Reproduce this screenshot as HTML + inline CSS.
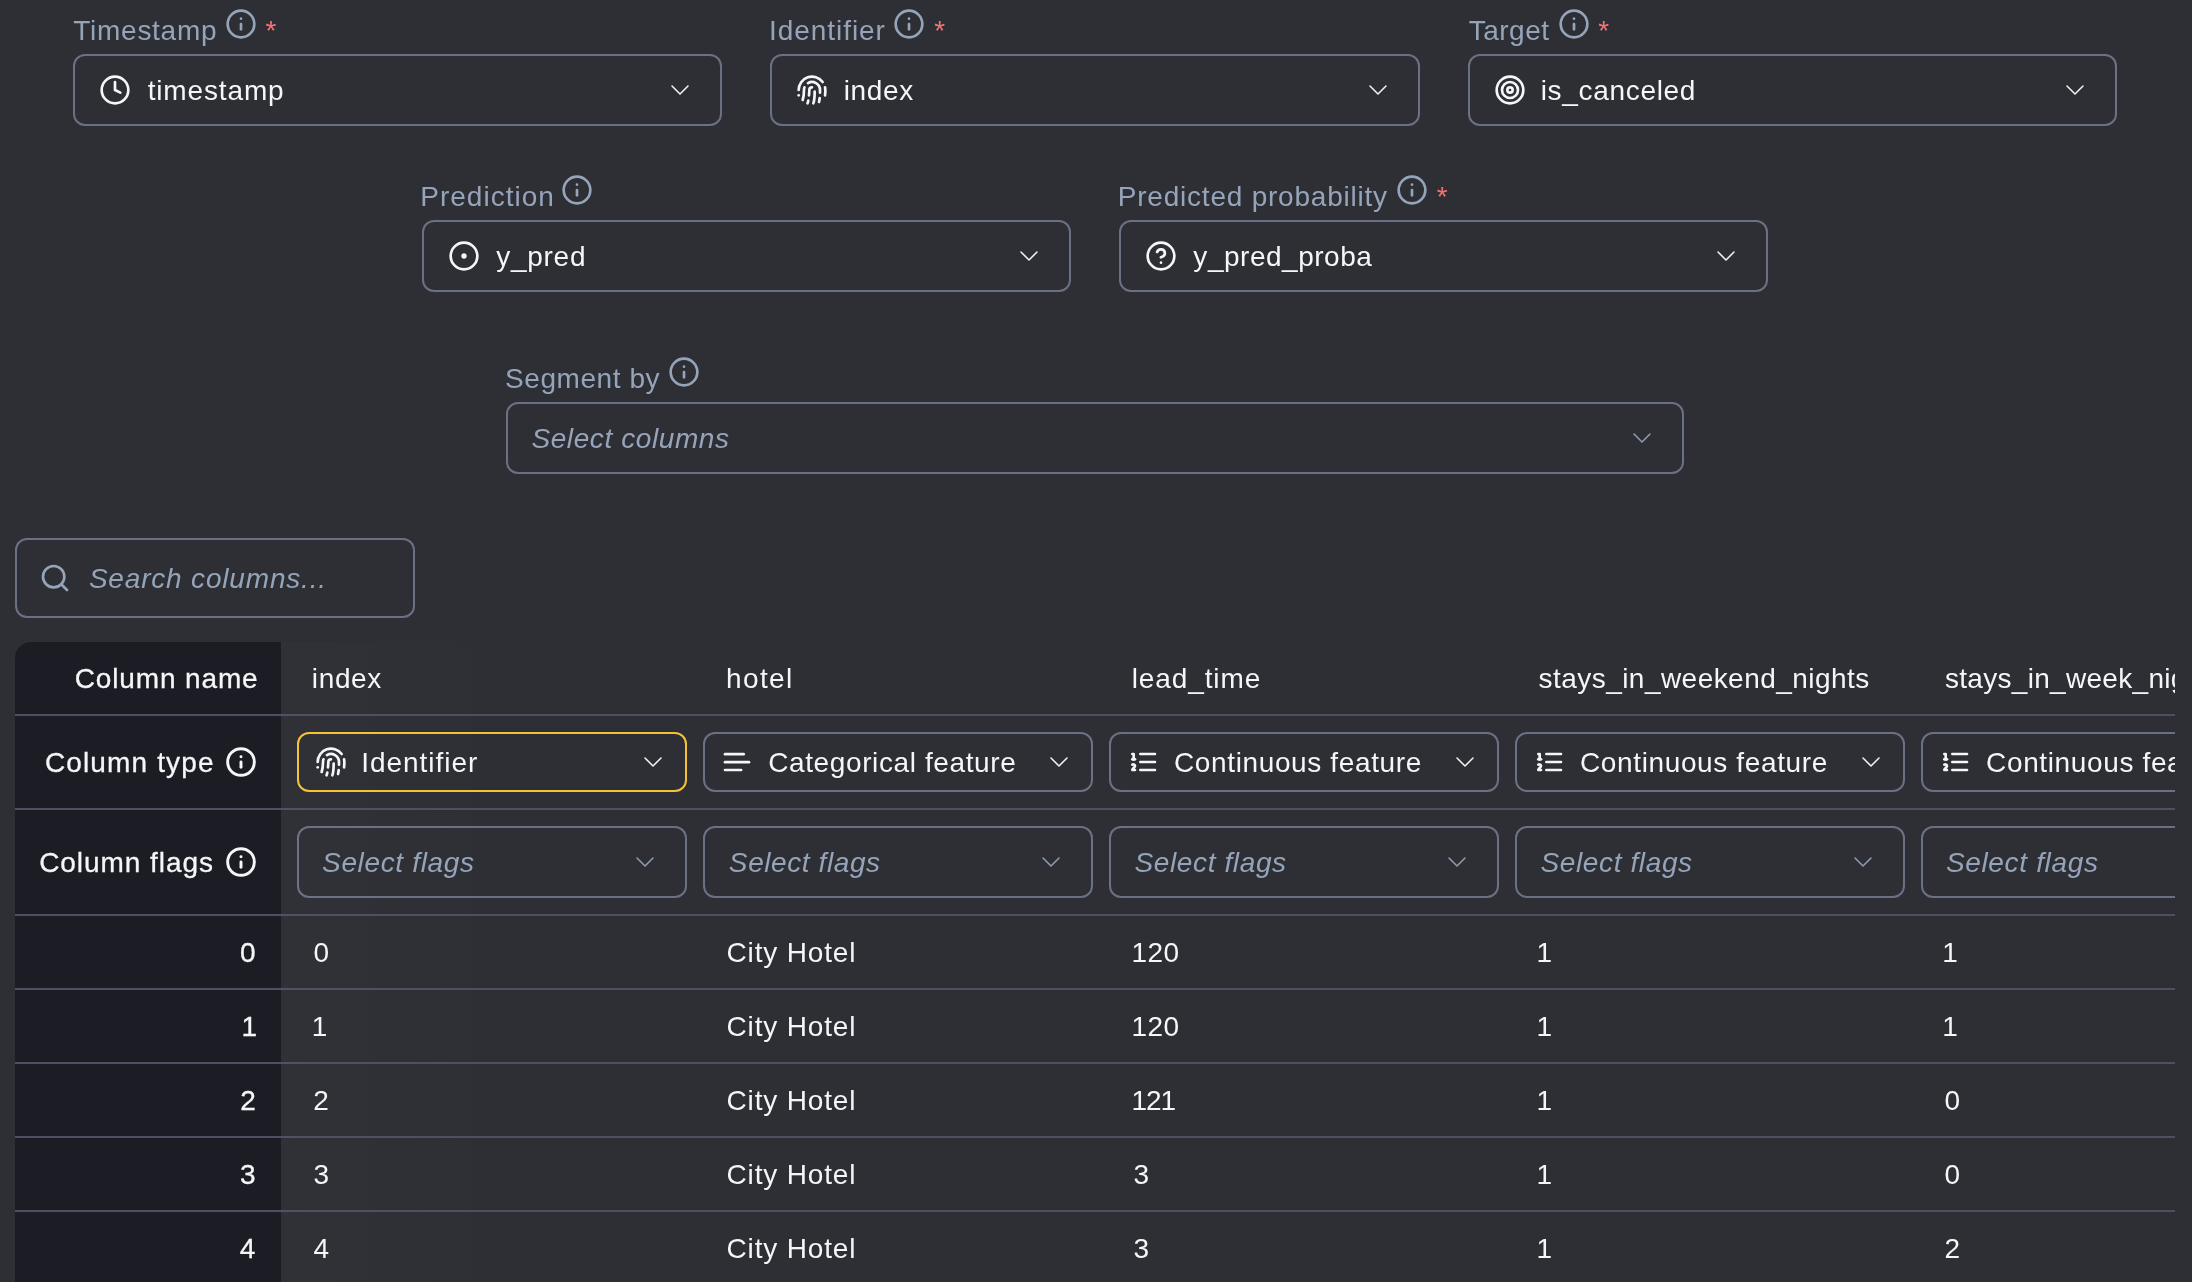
<!DOCTYPE html>
<html lang="en">
<head>
<meta charset="utf-8">
<title>Column configuration</title>
<style>
*{box-sizing:border-box;margin:0;padding:0}
html,body{width:2192px;height:1282px;overflow:hidden;background:#2e2f35}
body{will-change:transform}
body{font-family:"Liberation Sans",sans-serif;font-size:28px;line-height:40px;color:#f5f6f8;position:relative;letter-spacing:.55px}
[id]{position:relative;top:1px}
svg.ic{width:32px;height:32px;fill:none;stroke:currentColor;stroke-width:2;stroke-linecap:round;stroke-linejoin:round;flex:none;display:block}
.field{position:absolute}
.lbl{position:absolute;left:1px;top:-44px;height:40px;display:flex;align-items:center;color:#96a4ba;white-space:nowrap}
.lbl .t{display:inline-block}
.lbl svg.ic{position:relative;top:-6px;margin-left:10px}
.lbl .req{color:#f47272;margin-left:9px;position:relative;top:1px;font-size:28px}
.sel{width:100%;height:72px;border:2px solid #6a7184;border-radius:12px;display:flex;align-items:center;padding:0 24px;white-space:nowrap}
.sel .v{margin-left:16px;flex:1;position:relative;top:0px}
.sel .ph{flex:1;font-style:italic;color:#96a4ba}
.sel .chev{color:#f1f2f4;stroke-width:1.15}
.sel .chev.dim{color:#8f9cb2}

.search{position:absolute;left:15px;top:538px;width:400px;height:80px;border:2px solid #6a7184;border-radius:12px;display:flex;align-items:center;padding:0 22px;color:#96a4ba;white-space:nowrap}
.search .ph{margin-left:16px;font-style:italic}
.tbl{position:absolute;left:15px;top:642px;width:2160px;height:640px;overflow:hidden;border-top-left-radius:16px}
.tbl:before{content:"";position:absolute;left:266px;top:0;width:240px;height:100%;background:linear-gradient(to right,rgba(255,255,255,.013),rgba(255,255,255,0));pointer-events:none}
.tr{display:flex;border-bottom:2px solid #4c5062;width:2300px}
.h74{height:74px}.h94{height:94px}.h106{height:106px}
.st{width:266px;flex:none;background:#1c1d24;display:flex;align-items:center;justify-content:flex-end;padding-right:24px;white-space:nowrap}
.st{-webkit-text-stroke:0.3px #f5f6f8}
.st.hd{letter-spacing:.95px}
.st svg.ic{margin-left:12px;stroke-width:2.2}
.td{width:406px;flex:none;display:flex;align-items:center;white-space:nowrap;overflow:hidden}
.td.c0{width:414px}
.td.tx{padding-left:32px}
.td.sl{padding:0 8px}
.td.sl.c0{padding-left:16px}
.sel.sm{height:60px;padding:0 16px}
.sel.hl{border-color:#f7c135}
/*TUNE*/
#a1{letter-spacing:0.55px;left:-3.43px}
#a2{letter-spacing:0.55px;left:-4.67px}
#a3{letter-spacing:0.55px;left:-2.59px}
#a5{letter-spacing:0.55px;left:-4.45px}
#cn0{letter-spacing:0.63px;left:-1.15px}
#cn1{letter-spacing:1.38px;left:-1.00px}
#cn2{letter-spacing:0.89px;left:-1.30px}
#cn3{letter-spacing:0.46px;left:-0.53px}
#cn4{letter-spacing:0.31px;left:-0.14px}
#d0_0{letter-spacing:0.55px;left:0.39px}
#d0_1{letter-spacing:0.83px;left:-0.45px}
#d0_2{letter-spacing:0.40px;left:-1.54px}
#d0_3{letter-spacing:0.55px;left:-2.58px}
#d0_4{letter-spacing:0.55px;left:-2.65px}
#d1_0{letter-spacing:0.55px;left:-1.31px}
#d1_1{letter-spacing:0.83px;left:-0.45px}
#d1_2{letter-spacing:0.40px;left:-1.54px}
#d1_3{letter-spacing:0.55px;left:-2.58px}
#d1_4{letter-spacing:0.55px;left:-2.65px}
#d2_0{letter-spacing:0.55px;left:0.26px}
#d2_1{letter-spacing:0.83px;left:-0.45px}
#d2_2{letter-spacing:-1.00px;left:-1.54px}
#d2_3{letter-spacing:0.55px;left:-2.58px}
#d2_4{letter-spacing:0.55px;left:-0.50px}
#d3_0{letter-spacing:0.55px;left:0.50px}
#d3_1{letter-spacing:0.83px;left:-0.45px}
#d3_2{letter-spacing:0.55px;left:0.39px}
#d3_3{letter-spacing:0.55px;left:-2.58px}
#d3_4{letter-spacing:0.55px;left:-0.50px}
#d4_0{letter-spacing:0.55px;left:0.47px}
#d4_1{letter-spacing:0.83px;left:-0.45px}
#d4_2{letter-spacing:0.55px;left:0.39px}
#d4_3{letter-spacing:0.55px;left:-2.58px}
#d4_4{letter-spacing:0.55px;left:-0.50px}
#fl0{letter-spacing:0.65px;left:-0.94px}
#fl1{letter-spacing:0.59px;left:-0.15px}
#fl2{letter-spacing:0.63px;left:-0.57px}
#fl3{letter-spacing:0.63px;left:-0.57px}
#fl4{letter-spacing:0.66px;left:-1.08px}
#i1{letter-spacing:0.55px;left:-3.18px}
#i2{letter-spacing:0.55px;left:-4.32px}
#i3{letter-spacing:0.55px;left:-1.95px}
#i4{letter-spacing:0.55px;left:-6.32px}
#i5{letter-spacing:0.55px;left:-3.95px}
#i6{letter-spacing:0.55px;left:-3.95px}
#l1{letter-spacing:0.73px;left:-0.72px}
#l2{letter-spacing:0.94px;left:-1.95px}
#l3{letter-spacing:0.51px;left:-0.36px}
#l4{letter-spacing:1.01px;left:-2.76px}
#l5{letter-spacing:0.78px;left:-2.23px}
#l6{letter-spacing:0.57px;left:-1.99px}
#p6{letter-spacing:0.59px;left:-0.57px}
#ri0{letter-spacing:0.55px;left:-0.96px}
#ri1{letter-spacing:0.55px;left:0.53px}
#ri2{letter-spacing:0.55px;left:-0.58px}
#ri3{letter-spacing:0.55px;left:-0.82px}
#ri4{letter-spacing:0.55px;left:-1.06px}
#sph{letter-spacing:0.82px;left:1.89px}
#th0{letter-spacing:0.86px;left:1.55px}
#th1{letter-spacing:1.13px;left:1.60px}
#th2{letter-spacing:0.95px;left:0.95px}
#ty0{letter-spacing:0.98px;left:-1.83px}
#ty1{letter-spacing:0.61px;left:-0.80px}
#ty2{letter-spacing:0.63px;left:-1.01px}
#ty3{letter-spacing:0.63px;left:-1.01px}
#ty4{letter-spacing:0.63px;left:-0.90px}
#v1{letter-spacing:0.86px;left:0.63px}
#v2{letter-spacing:0.66px;left:-0.38px}
#v3{letter-spacing:0.69px;left:-1.38px}
#v4{letter-spacing:0.71px;left:0.31px}
#v5{letter-spacing:0.52px;left:0.36px}
/*END*/
</style>
</head>
<body>

<!-- row 1 -->
<div class="field" style="left:73px;top:54px;width:649px">
  <div class="lbl"><span class="t" id="l1">Timestamp</span><svg id="i1" class="ic" viewBox="0 0 24 24"><circle cx="12" cy="12" r="10"/><path d="M12 16v-4"/><path d="M12 8h.01"/></svg><span id="a1" class="req">*</span></div>
  <div class="sel"><svg class="ic" viewBox="0 0 24 24"><circle cx="12" cy="12" r="10"/><polyline points="12 6 12 12 16 14"/></svg><span class="v"><span id="v1">timestamp</span></span><svg class="ic chev" viewBox="0 0 24 24"><path d="m6 9 6 6 6-6"/></svg></div>
</div>

<div class="field" style="left:770px;top:54px;width:650px">
  <div class="lbl"><span class="t" id="l2">Identifier</span><svg id="i2" class="ic" viewBox="0 0 24 24"><circle cx="12" cy="12" r="10"/><path d="M12 16v-4"/><path d="M12 8h.01"/></svg><span id="a2" class="req">*</span></div>
  <div class="sel"><svg class="ic" viewBox="0 0 24 24"><path d="M12 10a2 2 0 0 0-2 2c0 1.020-.1 2.510-.26 4"/><path d="M14 13.120c0 2.380 0 6.380-1 8.880"/><path d="M17.290 21.020c.12-.6.43-2.300.5-3.020"/><path d="M2 12a10 10 0 0 1 18-6"/><path d="M2 16h.01"/><path d="M21.800 16c.2-2 .131-5.354 0-6"/><path d="M5 19.500C5.500 18 6 15 6 12a6 6 0 0 1 .34-2"/><path d="M8.650 22c.21-.66.45-1.320.57-2"/><path d="M9 6.800a6 6 0 0 1 9 5.200v2"/></svg><span class="v"><span id="v2">index</span></span><svg class="ic chev" viewBox="0 0 24 24"><path d="m6 9 6 6 6-6"/></svg></div>
</div>

<div class="field" style="left:1468px;top:54px;width:649px">
  <div class="lbl"><span class="t" id="l3">Target</span><svg id="i3" class="ic" viewBox="0 0 24 24"><circle cx="12" cy="12" r="10"/><path d="M12 16v-4"/><path d="M12 8h.01"/></svg><span id="a3" class="req">*</span></div>
  <div class="sel"><svg class="ic" viewBox="0 0 24 24"><circle cx="12" cy="12" r="10"/><circle cx="12" cy="12" r="6"/><circle cx="12" cy="12" r="2"/></svg><span class="v"><span id="v3">is_canceled</span></span><svg class="ic chev" viewBox="0 0 24 24"><path d="m6 9 6 6 6-6"/></svg></div>
</div>

<!-- row 2 -->
<div class="field" style="left:422px;top:220px;width:649px">
  <div class="lbl"><span class="t" id="l4">Prediction</span><svg id="i4" class="ic" viewBox="0 0 24 24"><circle cx="12" cy="12" r="10"/><path d="M12 16v-4"/><path d="M12 8h.01"/></svg></div>
  <div class="sel"><svg class="ic" viewBox="0 0 24 24"><circle cx="12" cy="12" r="10"/><circle cx="12" cy="12" r="1"/></svg><span class="v"><span id="v4">y_pred</span></span><svg class="ic chev" viewBox="0 0 24 24"><path d="m6 9 6 6 6-6"/></svg></div>
</div>

<div class="field" style="left:1119px;top:220px;width:649px">
  <div class="lbl"><span class="t" id="l5">Predicted probability</span><svg id="i5" class="ic" viewBox="0 0 24 24"><circle cx="12" cy="12" r="10"/><path d="M12 16v-4"/><path d="M12 8h.01"/></svg><span id="a5" class="req">*</span></div>
  <div class="sel"><svg class="ic" viewBox="0 0 24 24"><circle cx="12" cy="12" r="10"/><path d="M9.090 9a3 3 0 0 1 5.830 1c0 2-3 3-3 3"/><path d="M12 17h.01"/></svg><span class="v"><span id="v5">y_pred_proba</span></span><svg class="ic chev" viewBox="0 0 24 24"><path d="m6 9 6 6 6-6"/></svg></div>
</div>

<!-- row 3 -->
<div class="field" style="left:506px;top:402px;width:1178px">
  <div class="lbl"><span class="t" id="l6">Segment by</span><svg id="i6" class="ic" viewBox="0 0 24 24"><circle cx="12" cy="12" r="10"/><path d="M12 16v-4"/><path d="M12 8h.01"/></svg></div>
  <div class="sel"><span class="ph"><span id="p6">Select columns</span></span><svg class="ic chev dim" viewBox="0 0 24 24"><path d="m6 9 6 6 6-6"/></svg></div>
</div>

<!--TABLE-->
<div class="search"><svg class="ic" viewBox="0 0 24 24"><circle cx="11" cy="11" r="8"/><path d="m21 21-4.300-4.300"/></svg><span class="ph"><span id="sph">Search columns...</span></span></div>
<div class="tbl">
<div class="tr h74"><div class="st hd"><span id="th0">Column name</span></div><div class="td tx c0"><span id="cn0">index</span></div><div class="td tx c1"><span id="cn1">hotel</span></div><div class="td tx c2"><span id="cn2">lead_time</span></div><div class="td tx c3"><span id="cn3">stays_in_weekend_nights</span></div><div class="td tx c4"><span id="cn4">stays_in_week_nights</span></div></div>
<div class="tr h94"><div class="st hd"><span id="th1">Column type</span><svg class="ic" viewBox="0 0 24 24"><circle cx="12" cy="12" r="10"/><path d="M12 16v-4"/><path d="M12 8h.01"/></svg></div><div class="td sl c0"><div class="sel sm hl"><svg class="ic" viewBox="0 0 24 24"><path d="M12 10a2 2 0 0 0-2 2c0 1.020-.1 2.510-.26 4"/><path d="M14 13.120c0 2.380 0 6.380-1 8.880"/><path d="M17.290 21.020c.12-.6.43-2.300.5-3.020"/><path d="M2 12a10 10 0 0 1 18-6"/><path d="M2 16h.01"/><path d="M21.800 16c.2-2 .131-5.354 0-6"/><path d="M5 19.500C5.500 18 6 15 6 12a6 6 0 0 1 .34-2"/><path d="M8.650 22c.21-.66.45-1.320.57-2"/><path d="M9 6.800a6 6 0 0 1 9 5.200v2"/></svg><span class="v"><span id="ty0">Identifier</span></span><svg class="ic chev" viewBox="0 0 24 24"><path d="m6 9 6 6 6-6"/></svg></div></div><div class="td sl c1"><div class="sel sm "><svg class="ic" viewBox="0 0 24 24"><path d="M17 6.100H3"/><path d="M21 12.100H3"/><path d="M15.100 18H3"/></svg><span class="v"><span id="ty1">Categorical feature</span></span><svg class="ic chev" viewBox="0 0 24 24"><path d="m6 9 6 6 6-6"/></svg></div></div><div class="td sl c2"><div class="sel sm "><svg class="ic" viewBox="0 0 24 24"><line x1="10" x2="21" y1="6" y2="6"/><line x1="10" x2="21" y1="12" y2="12"/><line x1="10" x2="21" y1="18" y2="18"/><path d="M4 6h1v4"/><path d="M4 10h2"/><path d="M6 18H4c0-1 2-2 2-3s-1-1.500-2-1"/></svg><span class="v"><span id="ty2">Continuous feature</span></span><svg class="ic chev" viewBox="0 0 24 24"><path d="m6 9 6 6 6-6"/></svg></div></div><div class="td sl c3"><div class="sel sm "><svg class="ic" viewBox="0 0 24 24"><line x1="10" x2="21" y1="6" y2="6"/><line x1="10" x2="21" y1="12" y2="12"/><line x1="10" x2="21" y1="18" y2="18"/><path d="M4 6h1v4"/><path d="M4 10h2"/><path d="M6 18H4c0-1 2-2 2-3s-1-1.500-2-1"/></svg><span class="v"><span id="ty3">Continuous feature</span></span><svg class="ic chev" viewBox="0 0 24 24"><path d="m6 9 6 6 6-6"/></svg></div></div><div class="td sl c4"><div class="sel sm "><svg class="ic" viewBox="0 0 24 24"><line x1="10" x2="21" y1="6" y2="6"/><line x1="10" x2="21" y1="12" y2="12"/><line x1="10" x2="21" y1="18" y2="18"/><path d="M4 6h1v4"/><path d="M4 10h2"/><path d="M6 18H4c0-1 2-2 2-3s-1-1.500-2-1"/></svg><span class="v"><span id="ty4">Continuous feature</span></span><svg class="ic chev" viewBox="0 0 24 24"><path d="m6 9 6 6 6-6"/></svg></div></div></div>
<div class="tr h106"><div class="st hd"><span id="th2">Column flags</span><svg class="ic" viewBox="0 0 24 24"><circle cx="12" cy="12" r="10"/><path d="M12 16v-4"/><path d="M12 8h.01"/></svg></div><div class="td sl c0"><div class="sel"><span class="ph"><span id="fl0">Select flags</span></span><svg class="ic chev dim" viewBox="0 0 24 24"><path d="m6 9 6 6 6-6"/></svg></div></div><div class="td sl c1"><div class="sel"><span class="ph"><span id="fl1">Select flags</span></span><svg class="ic chev dim" viewBox="0 0 24 24"><path d="m6 9 6 6 6-6"/></svg></div></div><div class="td sl c2"><div class="sel"><span class="ph"><span id="fl2">Select flags</span></span><svg class="ic chev dim" viewBox="0 0 24 24"><path d="m6 9 6 6 6-6"/></svg></div></div><div class="td sl c3"><div class="sel"><span class="ph"><span id="fl3">Select flags</span></span><svg class="ic chev dim" viewBox="0 0 24 24"><path d="m6 9 6 6 6-6"/></svg></div></div><div class="td sl c4"><div class="sel"><span class="ph"><span id="fl4">Select flags</span></span><svg class="ic chev dim" viewBox="0 0 24 24"><path d="m6 9 6 6 6-6"/></svg></div></div></div>
<div class="tr h74"><div class="st"><span id="ri0">0</span></div><div class="td tx c0"><span id="d0_0">0</span></div><div class="td tx c1"><span id="d0_1">City Hotel</span></div><div class="td tx c2"><span id="d0_2">120</span></div><div class="td tx c3"><span id="d0_3">1</span></div><div class="td tx c4"><span id="d0_4">1</span></div></div>
<div class="tr h74"><div class="st"><span id="ri1">1</span></div><div class="td tx c0"><span id="d1_0">1</span></div><div class="td tx c1"><span id="d1_1">City Hotel</span></div><div class="td tx c2"><span id="d1_2">120</span></div><div class="td tx c3"><span id="d1_3">1</span></div><div class="td tx c4"><span id="d1_4">1</span></div></div>
<div class="tr h74"><div class="st"><span id="ri2">2</span></div><div class="td tx c0"><span id="d2_0">2</span></div><div class="td tx c1"><span id="d2_1">City Hotel</span></div><div class="td tx c2"><span id="d2_2">121</span></div><div class="td tx c3"><span id="d2_3">1</span></div><div class="td tx c4"><span id="d2_4">0</span></div></div>
<div class="tr h74"><div class="st"><span id="ri3">3</span></div><div class="td tx c0"><span id="d3_0">3</span></div><div class="td tx c1"><span id="d3_1">City Hotel</span></div><div class="td tx c2"><span id="d3_2">3</span></div><div class="td tx c3"><span id="d3_3">1</span></div><div class="td tx c4"><span id="d3_4">0</span></div></div>
<div class="tr h74"><div class="st"><span id="ri4">4</span></div><div class="td tx c0"><span id="d4_0">4</span></div><div class="td tx c1"><span id="d4_1">City Hotel</span></div><div class="td tx c2"><span id="d4_2">3</span></div><div class="td tx c3"><span id="d4_3">1</span></div><div class="td tx c4"><span id="d4_4">2</span></div></div>
</div>
<!--/TABLE-->
</body>
</html>
